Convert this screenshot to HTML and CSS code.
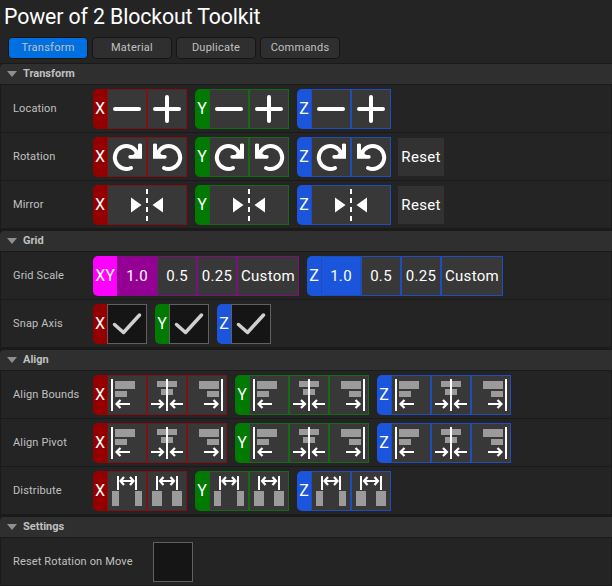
FILE: index.html
```
<!DOCTYPE html>
<html lang="en">
<head>
<meta charset="utf-8">
<title>Power of 2 Blockout Toolkit</title>
<link rel="stylesheet" href="styles.css">
</head>
<body>
<svg class="defs" width="0" height="0" aria-hidden="true">
  <symbol id="minus" viewBox="0 0 40 40"><path class="thick" d="M8 20H32"/></symbol>
  <symbol id="plus" viewBox="0 0 40 40"><path class="thick" d="M8 20H32M20 8V32"/></symbol>
  <symbol id="cw" viewBox="0 0 40 40"><path class="thick" d="M30 16.200A11.500 11.500 0 1 0 24 31"/><path fill="#fff" d="M35 7.500V21.700H23.200Q21.300 21.700 21.300 19.800T23.200 18H26L31 13V7.500Q31 6.500 33 6.500T35 7.500Z"/></symbol>
  <symbol id="ccw" viewBox="0 0 40 40"><use href="#cw" width="40" height="40" transform="translate(41 0) scale(-1 1)"/></symbol>
  <symbol id="mirror" viewBox="0 0 80 40"><path fill="#fff" d="M24 12.500L34.500 20L24 27.500ZM56 12.500L45.500 20L56 27.500Z"/><path stroke="#fff" stroke-width="2" stroke-dasharray="5 4" d="M40 4V36"/></symbol>
  <symbol id="check" viewBox="0 0 40 40"><path fill="none" stroke="#d0d0d0" stroke-width="3.500" stroke-linecap="round" stroke-linejoin="round" d="M7.500 20.500L16.500 28.500L32.500 11"/></symbol>
  <symbol id="left" viewBox="0 0 40 40"><path fill="#9b9b9b" d="M8 6h20v8H8zM8 16h12v6H8z"/><path fill="#fff" d="M4 4h2v32H4z"/><path class="thin" d="M23 29H9M13.500 25L9.500 29L13.500 33"/></symbol>
  <symbol id="center" viewBox="0 0 40 40"><path fill="#9b9b9b" d="M10 6h20v6H10zM14 14h12v6H14z"/><path fill="#fff" d="M19 4h2v32h-2z"/><path class="thin" d="M4 29H16M12 25L16 29L12 33M36 29H24M28 25L24 29L28 33"/></symbol>
  <symbol id="right" viewBox="0 0 40 40"><path fill="#9b9b9b" d="M12 6h20v8H12zM20 16h12v6H20z"/><path fill="#fff" d="M34 4h2v32h-2z"/><path class="thin" d="M17 29H31M26.500 25L30.500 29L26.500 33"/></symbol>
  <symbol id="dist-a" viewBox="0 0 40 40"><path fill="#9b9b9b" d="M5 20h7v15H5zM28 20h7v15h-7z"/><path fill="#fff" d="M10 5h2v14h-2zM28 5h2v14h-2z"/><path class="thin" d="M14 10H26M17 6L13.500 10L17 14M23 6L26.500 10L23 14"/></symbol>
  <symbol id="dist-b" viewBox="0 0 40 40"><path fill="#9b9b9b" d="M5 20h10v15H5zM25 20h10v15H25z"/><path fill="#fff" d="M9 5h2v14H9zM29 5h2v14h-2z"/><path class="thin" d="M13 10H27M16.500 6L13 10L16.500 14M23.500 6L27 10L23.500 14"/></symbol>
</svg>

<header class="top">
  <h1>Power of 2 Blockout Toolkit</h1>
  <nav class="tabs">
    <button class="tab active">Transform</button>
    <button class="tab">Material</button>
    <button class="tab">Duplicate</button>
    <button class="tab">Commands</button>
  </nav>
</header>

<section>
  <h2>Transform</h2>
  <div class="row"><span class="label">Location</span>
    <div class="group x"><b>X</b><button><svg><use href="#minus"/></svg></button><button><svg><use href="#plus"/></svg></button></div>
    <div class="group y"><b>Y</b><button><svg><use href="#minus"/></svg></button><button><svg><use href="#plus"/></svg></button></div>
    <div class="group z"><b>Z</b><button><svg><use href="#minus"/></svg></button><button><svg><use href="#plus"/></svg></button></div>
  </div>
  <div class="row"><span class="label">Rotation</span>
    <div class="group x"><b>X</b><button><svg><use href="#cw"/></svg></button><button><svg><use href="#ccw"/></svg></button></div>
    <div class="group y"><b>Y</b><button><svg><use href="#cw"/></svg></button><button><svg><use href="#ccw"/></svg></button></div>
    <div class="group z"><b>Z</b><button><svg><use href="#cw"/></svg></button><button><svg><use href="#ccw"/></svg></button></div>
    <button class="reset">Reset</button>
  </div>
  <div class="row"><span class="label">Mirror</span>
    <div class="group x"><b>X</b><button class="wide"><svg><use href="#mirror"/></svg></button></div>
    <div class="group y"><b>Y</b><button class="wide"><svg><use href="#mirror"/></svg></button></div>
    <div class="group z"><b>Z</b><button class="wide"><svg><use href="#mirror"/></svg></button></div>
    <button class="reset">Reset</button>
  </div>
</section>

<section>
  <h2>Grid</h2>
  <div class="row"><span class="label">Grid Scale</span>
    <div class="group xy"><b>XY</b><button class="on">1.0</button><button>0.5</button><button>0.25</button><button class="custom">Custom</button></div>
    <div class="group z"><b>Z</b><button class="on">1.0</button><button>0.5</button><button>0.25</button><button class="custom">Custom</button></div>
  </div>
  <div class="row"><span class="label">Snap Axis</span>
    <div class="group x"><b>X</b><span class="box"><svg><use href="#check"/></svg></span></div>
    <div class="group y"><b>Y</b><span class="box"><svg><use href="#check"/></svg></span></div>
    <div class="group z"><b>Z</b><span class="box"><svg><use href="#check"/></svg></span></div>
  </div>
</section>

<section>
  <h2>Align</h2>
  <div class="row"><span class="label">Align Bounds</span>
    <div class="group x"><b>X</b><button><svg><use href="#left"/></svg></button><button><svg><use href="#center"/></svg></button><button><svg><use href="#right"/></svg></button></div>
    <div class="group y"><b>Y</b><button><svg><use href="#left"/></svg></button><button><svg><use href="#center"/></svg></button><button><svg><use href="#right"/></svg></button></div>
    <div class="group z"><b>Z</b><button><svg><use href="#left"/></svg></button><button><svg><use href="#center"/></svg></button><button><svg><use href="#right"/></svg></button></div>
  </div>
  <div class="row"><span class="label">Align Pivot</span>
    <div class="group x"><b>X</b><button><svg><use href="#left"/></svg></button><button><svg><use href="#center"/></svg></button><button><svg><use href="#right"/></svg></button></div>
    <div class="group y"><b>Y</b><button><svg><use href="#left"/></svg></button><button><svg><use href="#center"/></svg></button><button><svg><use href="#right"/></svg></button></div>
    <div class="group z"><b>Z</b><button><svg><use href="#left"/></svg></button><button><svg><use href="#center"/></svg></button><button><svg><use href="#right"/></svg></button></div>
  </div>
  <div class="row"><span class="label">Distribute</span>
    <div class="group x"><b>X</b><button><svg><use href="#dist-a"/></svg></button><button><svg><use href="#dist-b"/></svg></button></div>
    <div class="group y"><b>Y</b><button><svg><use href="#dist-a"/></svg></button><button><svg><use href="#dist-b"/></svg></button></div>
    <div class="group z"><b>Z</b><button><svg><use href="#dist-a"/></svg></button><button><svg><use href="#dist-b"/></svg></button></div>
  </div>
</section>

<section>
  <h2>Settings</h2>
  <div class="row"><span class="label long">Reset Rotation on Move</span><span class="box"></span></div>
</section>
</body>
</html>
```
FILE: styles.css
```
* { box-sizing: border-box; }
body { margin: 0; width: 612px; height: 586px; overflow: hidden; background: #1a1a1a; color: #fff; font-family: Roboto, sans-serif; }
button { margin: 0; padding: 0; font-family: inherit; color: inherit; }
.defs { display: block; }
.thick { fill: none; stroke: #fff; stroke-width: 4; stroke-linecap: round; }
.thin { fill: none; stroke: #fff; stroke-width: 2.200; }

.top { height: 63px; background: #242424; }
h1 { margin: 0; padding: 4px 0 0 4px; height: 37px; font-size: 21.300px; letter-spacing: -0.120px; line-height: 26px; font-weight: 400; white-space: nowrap; }
.tabs { display: flex; gap: 4px; padding-left: 8px; }
.tab { width: 80px; height: 22px; border: 1px solid #151515; border-radius: 4px; background: #2f2f2f; color: #c0c0c0; font-size: 11px; letter-spacing: 0.250px; line-height: 20px; }
.tab.active { background: #0070e0; }

section { margin-bottom: 2px; }
section:nth-of-type(1) { border-top: 1px solid #1a1a1a; }
h2 { display: flex; align-items: center; margin: 0; height: 21px; padding: 0 0 1px 7px; border-bottom: 1px solid #1a1a1a; border-radius: 4px 0 0 0; background: #2f2f2f; color: #c0c0c0; font-size: 11px; letter-spacing: 0; font-weight: 700; }
h2::before { content: ""; margin: 0 6px 0 0; border: 5px solid transparent; border-top: 6px solid #8f8f8f; border-bottom: 0; }
.row { display: flex; gap: 8px; height: 48px; padding: 4px 0 3px 12px; border: solid #1a1a1a; border-width: 0 1px 1px; background: #242424; }
.label { width: 72px; height: 40px; color: #c0c0c0; font-size: 11px; letter-spacing: 0.150px; line-height: 40px; white-space: nowrap; }
.label.long { width: 132px; }

.group { display: flex; height: 40px; }
.group b { width: 14px; border-radius: 5px 0 0 5px; background: var(--tab); font-size: 16px; font-weight: 400; line-height: 40px; text-align: center; }
.group button { width: 40px; height: 40px; border: 1px solid var(--edge); background: #383838; font-size: 15px; letter-spacing: 0.300px; line-height: 38px; }
.group button.wide { width: 80px; }
.group button.custom { width: 62px; }
.group button.on { background: var(--on); }
.group svg { display: block; width: 40px; height: 40px; margin: -1px; }
.group .wide svg { width: 80px; }
.x { --tab: #940000; --edge: #7d1214; }
.y { --tab: #007a00; --edge: #136b16; }
.z { --tab: #1a55dc; --edge: #1f4dbb; --on: #1a55dc; }
.xy { --tab: #ff00ff; --edge: #7b117c; --on: #940094; }
.group.xy b { width: 24px; }
.box { width: 40px; height: 40px; border: 1px solid #606060; background: #151515; }
.reset { width: 46px; height: 38px; margin: 1px 0 0 -1px; border: 0; background: #323232; font-size: 15px; letter-spacing: 0.300px; line-height: 38px; }
```
